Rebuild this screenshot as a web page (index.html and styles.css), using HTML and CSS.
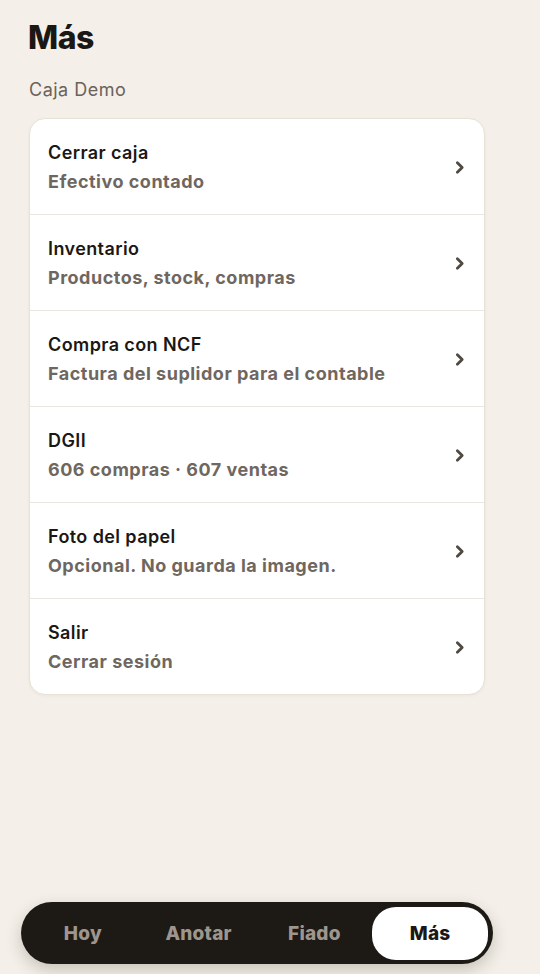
FILE: index.html
```html
<!DOCTYPE html>
<html lang="es">
<head>
    <meta charset="UTF-8">
    <meta name="viewport" content="width=device-width, initial-scale=1.0">
    <title>Más</title>
    <link rel="stylesheet" href="styles.css">
</head>
<body>
    <div id="screen">
        <h1 id="title">Más</h1>
        <div id="subtitle">Caja Demo</div>
        <ul id="menu">
            <li class="item">
                <div class="text">
                    <div class="label">Cerrar caja</div>
                    <div class="hint">Efectivo contado</div>
                </div>
                <svg class="chevron" viewBox="0 0 10 14"><path d="M3 2.5 L7.5 7 L3 11.5"/></svg>
            </li>
            <li class="item">
                <div class="text">
                    <div class="label">Inventario</div>
                    <div class="hint">Productos, stock, compras</div>
                </div>
                <svg class="chevron" viewBox="0 0 10 14"><path d="M3 2.5 L7.5 7 L3 11.5"/></svg>
            </li>
            <li class="item">
                <div class="text">
                    <div class="label">Compra con NCF</div>
                    <div class="hint">Factura del suplidor para el contable</div>
                </div>
                <svg class="chevron" viewBox="0 0 10 14"><path d="M3 2.5 L7.5 7 L3 11.5"/></svg>
            </li>
            <li class="item">
                <div class="text">
                    <div class="label">DGII</div>
                    <div class="hint">606 compras · 607 ventas</div>
                </div>
                <svg class="chevron" viewBox="0 0 10 14"><path d="M3 2.5 L7.5 7 L3 11.5"/></svg>
            </li>
            <li class="item">
                <div class="text">
                    <div class="label">Foto del papel</div>
                    <div class="hint">Opcional. No guarda la imagen.</div>
                </div>
                <svg class="chevron" viewBox="0 0 10 14"><path d="M3 2.5 L7.5 7 L3 11.5"/></svg>
            </li>
            <li class="item">
                <div class="text">
                    <div class="label">Salir</div>
                    <div class="hint">Cerrar sesión</div>
                </div>
                <svg class="chevron" viewBox="0 0 10 14"><path d="M3 2.5 L7.5 7 L3 11.5"/></svg>
            </li>
        </ul>
    </div>
    <nav id="tabs">
        <button type="button" class="tab">Hoy</button>
        <button type="button" class="tab">Anotar</button>
        <button type="button" class="tab">Fiado</button>
        <button type="button" class="tab active">Más</button>
    </nav>
</body>
</html>
```

FILE: styles.css
```css
body {
    margin: 0;
    height: 974px;
    background-color: #f4f0e9;
    font-family: Inter, Lato, sans-serif;
    color: #1b1714;
    position: relative;
    overflow: hidden;
}
#screen {
    padding: 18px 55px 0 29px;
}
#title {
    margin: 0 0 0 -1px;
    font-size: 32px;
    font-weight: 800;
    line-height: 40px;
    letter-spacing: -0.5px;
}
#subtitle {
    margin-top: 21px;
    font-size: 18px;
    line-height: 22px;
    letter-spacing: 0.5px;
    color: #6a625b;
}
#menu {
    list-style: none;
    margin: 17px 0 0;
    padding: 0;
    background-color: #ffffff;
    border: 1px solid #e7e1d7;
    border-radius: 16px;
    box-shadow: 0 1px 3px rgba(80, 60, 30, 0.06);
    overflow: hidden;
}
.item {
    display: flex;
    align-items: center;
    justify-content: space-between;
    height: 95px;
    padding: 0 19px 0 18px;
    border-bottom: 1px solid #ebe6de;
}
.item:last-child {
    border-bottom: none;
}
.text {
    margin-top: 2px;
}
.label {
    font-size: 18px;
    font-weight: 600;
    line-height: 24px;
    letter-spacing: 0.4px;
}
.hint {
    margin-top: 5px;
    font-size: 18px;
    font-weight: 650;
    line-height: 24px;
    letter-spacing: 0.5px;
    color: #6f675f;
}
.chevron {
    width: 11px;
    height: 15px;
    fill: none;
    stroke: #4f4843;
    stroke-width: 2.6;
    stroke-linecap: round;
    stroke-linejoin: round;
    margin-top: 2px;
}
#tabs {
    position: absolute;
    left: 21px;
    top: 902px;
    width: 463px;
    height: 53px;
    padding: 5px 5px 4px 4px;
    display: grid;
    grid-template-columns: repeat(4, 1fr);
    background-color: #1d1915;
    border-radius: 32px;
    box-shadow: 0 6px 16px rgba(40, 30, 20, 0.22);
}
.tab {
    border: none;
    background: transparent;
    font-family: Inter, Lato, sans-serif;
    font-size: 19px;
    font-weight: 800;
    letter-spacing: 0.2px;
    color: #9e968e;
    border-radius: 24px;
    cursor: pointer;
}
.tab.active {
    background-color: #ffffff;
    color: #1b1714;
}
```
